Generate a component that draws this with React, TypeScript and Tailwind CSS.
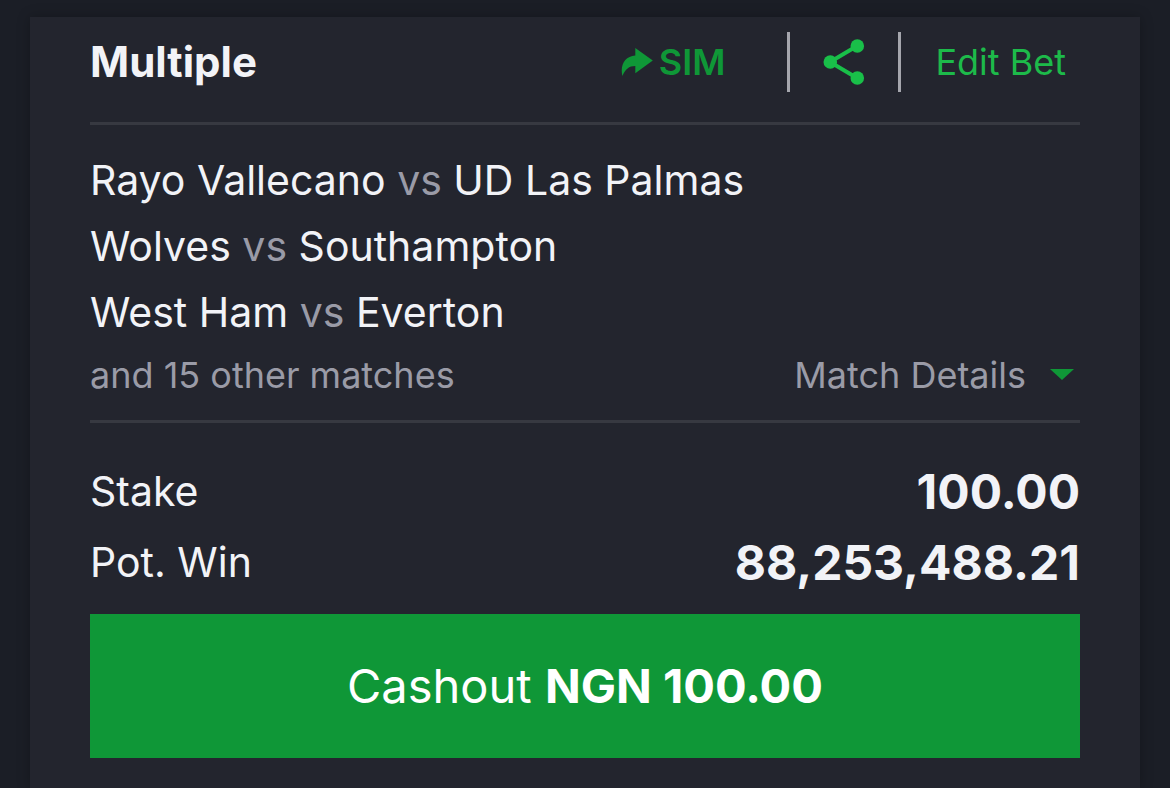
import clsx from "clsx";
import type { ReactNode } from "react";

type Match = { home: string; away: string };

const MATCHES: Match[] = [
  { home: "Rayo Vallecano", away: "UD Las Palmas" },
  { home: "Wolves", away: "Southampton" },
  { home: "West Ham", away: "Everton" },
];

const ForwardIcon = () => (
  <svg viewBox="0 0 32 28" className="w-8 h-7" fill="currentColor" aria-hidden="true">
    <path d="M14.3 0 31.8 12.4 14.3 25.3V18C7.8 18 4.6 21 1.4 28 -1.2 17 4 8 14.3 7.4Z" />
  </svg>
);

const ShareIcon = () => (
  <svg viewBox="0 0 42 46" className="w-[42px] h-[46px]" aria-hidden="true">
    <path d="M34 7 7 23 34 39" fill="none" stroke="currentColor" strokeWidth="4" />
    <g fill="currentColor">
      <circle cx="34.3" cy="7" r="6.8" />
      <circle cx="7.3" cy="23" r="6.8" />
      <circle cx="34.3" cy="39" r="6.8" />
    </g>
  </svg>
);

const CaretIcon = () => (
  <svg viewBox="0 0 24 11" className="w-6 h-[11px] text-[#0f9737]" fill="currentColor" aria-hidden="true">
    <path d="M0 0H24L12 11Z" />
  </svg>
);

const Divider = () => <span className="w-[3px] h-[60px] bg-[#a5a6ad]" />;

const SummaryRow = ({ label, children }: { label: string; children: ReactNode }) => (
  <div className="flex items-center justify-between h-[71px]">
    <dt className="text-[41px]">{label}</dt>
    <dd className="text-5xl font-bold">{children}</dd>
  </div>
);

const Header = () => (
  <header className="flex items-center justify-between h-[108px] pb-4 border-b-[3px] border-[#373941]">
    <h1 className="text-[42px] font-bold">Multiple</h1>
    <div className="flex items-center">
      <button type="button" className="flex items-center gap-1.5 text-4xl font-semibold text-[#0f9737] mr-[62px]">
        <ForwardIcon />
        SIM
      </button>
      <Divider />
      <button type="button" aria-label="Share" className="px-[33px] text-[#19bf49]">
        <ShareIcon />
      </button>
      <Divider />
      <button type="button" className="pl-[34px] pr-3.5 text-4xl text-[#1dba4a]">
        Edit Bet
      </button>
    </div>
  </header>
);

const MatchList = () => (
  <section className="pt-[22px] pb-4 border-b-[3px] border-[#373941]">
    <ul>
      {MATCHES.map(({ home, away }) => (
        <li key={home} className="text-[41px] leading-[66px]">
          {home} <span className="text-[#9a9ba7]">vs</span> {away}
        </li>
      ))}
    </ul>
    <div className="flex items-center justify-between h-[59px] text-4xl text-[#9a9ba7]">
      <p>and 15 other matches</p>
      <button type="button" className="flex items-center gap-6 pr-1.5">
        Match Details
        <CaretIcon />
      </button>
    </div>
  </section>
);

export default function App() {
  return (
    <div
      className={clsx(
        "flex flex-col min-h-screen px-[30px] pt-[17px] bg-[#1b1e26]",
        "font-['Inter',sans-serif] text-[#f2f3f7] whitespace-nowrap",
      )}
    >
      <main className="grow px-[60px] pb-[30px] bg-[#23252e] shadow-[0_0_12px_rgba(0,0,0,0.25)]">
        <Header />
        <MatchList />
        <dl className="pt-[33px] pb-4">
          <SummaryRow label="Stake">100.00</SummaryRow>
          <SummaryRow label="Pot. Win">88,253,488.21</SummaryRow>
        </dl>
        <button type="button" className="w-full h-36 bg-[#0f9737] text-[47px] text-white">
          Cashout <strong className="font-bold">NGN 100.00</strong>
        </button>
      </main>
    </div>
  );
}
